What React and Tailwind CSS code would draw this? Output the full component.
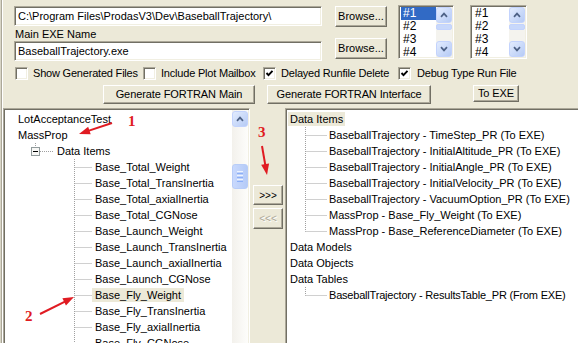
import React from "react";

const SUNKEN =
  "border border-t-[#aca899] border-l-[#aca899] border-b-white border-r-white shadow-[inset_1px_1px_0_#716f64,inset_-1px_-1px_0_#f1efe2]";
const RAISED =
  "border border-t-white border-l-white border-b-[#716f64] border-r-[#716f64] shadow-[inset_-1px_-1px_0_#aca899]";

function Btn({ className = "", children, disabled }) {
  return (
    <div
      className={`flex items-center justify-center whitespace-nowrap bg-[#ece9d8] ${RAISED} ${
        disabled ? "text-[#aca899] [text-shadow:1px_1px_0_#fff]" : "text-black"
      } ${className}`}
    >
      {children}
    </div>
  );
}

function Check({ checked }) {
  return (
    <div className={`w-[13px] h-[13px] shrink-0 bg-white ${SUNKEN} flex items-center justify-center`}>
      {checked && (
        <svg width="9" height="9" viewBox="0 0 9 9">
          <path d="M1.5 4 L3.5 6.2 L7.5 1.8" stroke="#000" strokeWidth="1.9" fill="none" />
        </svg>
      )}
    </div>
  );
}

function SBtn({ dir, className = "" }) {
  return (
    <div
      className={`w-[16px] h-[16px] shrink-0 rounded-[3px] border border-[#c3d3fd] bg-linear-to-br from-[#e3ecfe] to-[#b6cbf5] flex items-center justify-center ${className}`}
    >
      <svg width="8" height="6" viewBox="0 0 8 6">
        <path
          d={dir === "up" ? "M1 4.8 L4 1.6 L7 4.8" : "M1 1.2 L4 4.4 L7 1.2"}
          stroke="#4d6185"
          strokeWidth="1.7"
          fill="none"
        />
      </svg>
    </div>
  );
}

function ListBox({ selected }) {
  return (
    <div className={`h-[54px] flex bg-white ${SUNKEN} p-[1px]`}>
      <div className="flex-1 flex flex-col pl-[1px]">
        {["#1", "#2", "#3", "#4"].map((t, i) => (
          <div
            key={t}
            className={`h-[13px] leading-[13px] pl-[2px] text-[12px] ${
              selected && i === 0 ? "bg-[#316ac5] text-white" : "text-black"
            }`}
          >
            {t}
          </div>
        ))}
      </div>
      <div className="w-[16px] flex flex-col bg-[#f4f3ee]">
        <SBtn dir="up" className="h-[15px]" />
        <div className="mt-[1px] h-[6px] rounded-[2px] border border-[#c3d3fd] bg-[#c8d8fb]" />
        <div className="flex-1" />
        <SBtn dir="down" className="h-[15px]" />
      </div>
    </div>
  );
}

const leaves = [
  "Base_Total_Weight",
  "Base_Total_TransInertia",
  "Base_Total_axialInertia",
  "Base_Total_CGNose",
  "Base_Launch_Weight",
  "Base_Launch_TransInertia",
  "Base_Launch_axialInertia",
  "Base_Launch_CGNose",
  "Base_Fly_Weight",
  "Base_Fly_TransInertia",
  "Base_Fly_axialInertia",
  "Base_Fly_CGNose",
];

const rightItems = [
  "BaseballTrajectory - TimeStep_PR (To EXE)",
  "BaseballTrajectory - InitialAltitude_PR (To EXE)",
  "BaseballTrajectory - InitialAngle_PR (To EXE)",
  "BaseballTrajectory - InitialVelocity_PR (To EXE)",
  "BaseballTrajectory - VacuumOption_PR (To EXE)",
  "MassProp - Base_Fly_Weight (To EXE)",
  "MassProp - Base_ReferenceDiameter (To EXE)",
];

const DOT = { stroke: "#a0a0a0", strokeWidth: 1, strokeDasharray: "1 1" };

function Connector({ width, x, last }) {
  return (
    <svg width={width} height="16" className="shrink-0">
      <line x1={x} y1={0} x2={x} y2={last ? 8.5 : 16} {...DOT} />
      <line x1={x} y1={8.5} x2={width} y2={8.5} {...DOT} />
    </svg>
  );
}

function Row({ children }) {
  return <div className="h-4 flex items-center whitespace-nowrap leading-[16px]">{children}</div>;
}

function arrowPts(x1, y1, x2, y2, len = 11, w = 4) {
  const dx = x2 - x1;
  const dy = y2 - y1;
  const L = Math.hypot(dx, dy);
  const ux = dx / L;
  const uy = dy / L;
  const bx = x2 - ux * len;
  const by = y2 - uy * len;
  const px = -uy * w;
  const py = ux * w;
  return {
    line: [x1, y1, bx + ux * 2, by + uy * 2],
    poly: `${x2},${y2} ${bx + px},${by + py} ${bx - px},${by - py}`,
  };
}

function Arrow({ x1, y1, x2, y2 }) {
  const a = arrowPts(x1, y1, x2, y2);
  return (
    <g>
      <line x1={a.line[0]} y1={a.line[1]} x2={a.line[2]} y2={a.line[3]} stroke="#e01b22" strokeWidth="2" />
      <polygon points={a.poly} fill="#e01b22" />
    </g>
  );
}

export default function App() {
  return (
    <div className="w-[578px] h-[343px] bg-[#ece9d8] overflow-hidden relative flex text-[11px] text-black font-['Liberation_Sans',Arial,sans-serif]">
      {/* left frame strip */}
      <div className="w-[3px] h-full flex shrink-0">
        <div className="w-px bg-[#d8d5c6]" />
        <div className="w-px bg-[#aca899]" />
        <div className="w-px bg-white" />
      </div>

      <div className="flex-1 flex flex-col min-w-0">
        {/* top area */}
        <div className="h-[108px] flex flex-col shrink-0">
          {/* row 1 */}
          <div className="h-[66px] pt-[5px] flex">
            <div className="ml-[11px] w-[308px] flex flex-col pt-[1px]">
              <div className={`h-[20px] bg-white ${SUNKEN} flex items-center pl-[3px] whitespace-nowrap`}>
                C:\Program Files\ProdasV3\Dev\BaseballTrajectory\
              </div>
              <div className="h-[15px] flex items-end leading-[13px] pl-[1px]">Main EXE Name</div>
              <div className={`h-[20px] bg-white ${SUNKEN} flex items-center pl-[3px]`}>
                BaseballTrajectory.exe
              </div>
            </div>
            <div className="ml-[13px] w-[52px] flex flex-col">
              <Btn className="h-[21px] mt-[1px]">Browse...</Btn>
              <Btn className="h-[21px] mt-[11px]">Browse...</Btn>
            </div>
            <div className="ml-[11px] w-[56px]">
              <ListBox selected />
            </div>
            <div className="ml-[16px] w-[57px]">
              <ListBox />
            </div>
          </div>

          {/* row 2 checkboxes */}
          <div className="h-[15px] flex items-center whitespace-nowrap tracking-[-0.2px]">
            <div className="ml-[12px] w-[128px] flex items-center gap-[5px]">
              <Check />
              <span>Show Generated Files</span>
            </div>
            <div className="w-[120px] flex items-center gap-[5px]">
              <Check />
              <span>Include Plot Mailbox</span>
            </div>
            <div className="w-[135px] flex items-center gap-[5px]">
              <Check checked />
              <span>Delayed Runfile Delete</span>
            </div>
            <div className="flex items-center gap-[6px]">
              <Check checked />
              <span>Debug Type Run File</span>
            </div>
          </div>

          {/* row 3 buttons */}
          <div className="flex items-start pt-[4px] tracking-[-0.1px]">
            <Btn className="ml-[100px] w-[152px] h-[19px]">Generate FORTRAN Main</Btn>
            <Btn className="ml-[12px] w-[164px] h-[19px]">Generate FORTRAN Interface</Btn>
            <Btn className="ml-[42px] w-[46px] h-[17px]">To EXE</Btn>
          </div>
        </div>

        {/* bottom area */}
        <div className="flex h-[240px] shrink-0">
          {/* left tree */}
          <div className={`w-[247px] h-[240px] bg-white ${SUNKEN} p-[1px] flex shrink-0`}>
            <div className="flex-1 flex flex-col pt-[1px] min-w-0 overflow-hidden">
              <Row>
                <span className="ml-[10px] px-[3px]">LotAcceptanceTest</span>
              </Row>
              <Row>
                <span className="ml-[10px] px-[3px]">MassProp</span>
              </Row>
              <Row>
                <svg width="49" height="16" className="shrink-0">
                  <line x1="30.5" y1="0" x2="30.5" y2="4" {...DOT} />
                  <rect x="26.5" y="4.5" width="8" height="8" fill="#f7f7f5" stroke="#919b9c" />
                  <line x1="28" y1="8.5" x2="33" y2="8.5" stroke="#000" strokeWidth="1" />
                  <line x1="35" y1="8.5" x2="49" y2="8.5" {...DOT} />
                </svg>
                <span className="px-[3px]">Data Items</span>
              </Row>
              {leaves.map((t) => (
                <Row key={t}>
                  <Connector width={87} x={69.5} />
                  <span className={`px-[3px] leading-[14px] ${t === "Base_Fly_Weight" ? "bg-[#ece9d8]" : ""}`}>
                    {t}
                  </span>
                </Row>
              ))}
            </div>
            <div className="w-[16px] flex flex-col bg-linear-to-r from-[#f3f1ec] to-[#fdfdfb]">
              <SBtn dir="up" className="mt-[1px]" />
              <div className="mt-[37px] h-[25px] rounded-[3px] border border-[#b8cdf8] bg-linear-to-r from-[#c9d9fd] to-[#b5cbf7] flex flex-col items-center justify-center gap-[1px]">
                <div className="w-[6px] h-px bg-[#eef4fe]" />
                <div className="w-[6px] h-px bg-[#8cb0f8]" />
                <div className="w-[6px] h-px bg-[#eef4fe]" />
                <div className="w-[6px] h-px bg-[#8cb0f8]" />
                <div className="w-[6px] h-px bg-[#eef4fe]" />
                <div className="w-[6px] h-px bg-[#8cb0f8]" />
              </div>
            </div>
          </div>

          {/* middle buttons */}
          <div className="w-[35px] flex flex-col shrink-0">
            <Btn className="ml-[3px] mt-[77px] w-[30px] h-[20px] text-[10px]">&gt;&gt;&gt;</Btn>
            <Btn disabled className="ml-[3px] mt-[3px] w-[30px] h-[21px] text-[10px]">
              &lt;&lt;&lt;
            </Btn>
          </div>

          {/* right tree */}
          <div className={`w-[300px] h-[240px] bg-white ${SUNKEN} p-[1px] shrink-0 flex flex-col pt-[2px]`}>
            <Row>
              <span className="ml-[1px] px-[2px] leading-[14px] bg-[#ece9d8]">Data Items</span>
            </Row>
            {rightItems.map((t, i) => (
              <Row key={t}>
                <Connector width={40} x={18.5} last={i === rightItems.length - 1} />
                <span className="px-[2px]">{t}</span>
              </Row>
            ))}
            <Row>
              <span className="ml-[1px] px-[2px]">Data Models</span>
            </Row>
            <Row>
              <span className="ml-[1px] px-[2px]">Data Objects</span>
            </Row>
            <Row>
              <span className="ml-[1px] px-[2px]">Data Tables</span>
            </Row>
            <Row>
              <Connector width={40} x={18.5} last />
              <span className="px-[2px] tracking-[-0.2px]">BaseballTrajectory - ResultsTable_PR (From EXE)</span>
            </Row>
          </div>
        </div>
      </div>

      {/* red annotations overlay */}
      <svg className="absolute left-0 top-0 pointer-events-none" width="578" height="343">
        <Arrow x1={112} y1={123} x2={79} y2={134} />
        <Arrow x1={40} y1={314} x2={74} y2={297} />
        <Arrow x1={262} y1={146} x2={267} y2={175} />
      </svg>
      <span className="absolute left-[128px] top-[113px] text-[15px] leading-[16px] font-bold text-[#e01b22] font-['Liberation_Serif',serif]">
        1
      </span>
      <span className="absolute left-[25px] top-[308px] text-[15px] leading-[16px] font-bold text-[#e01b22] font-['Liberation_Serif',serif]">
        2
      </span>
      <span className="absolute left-[258px] top-[124px] text-[15px] leading-[16px] font-bold text-[#e01b22] font-['Liberation_Serif',serif]">
        3
      </span>
    </div>
  );
}
